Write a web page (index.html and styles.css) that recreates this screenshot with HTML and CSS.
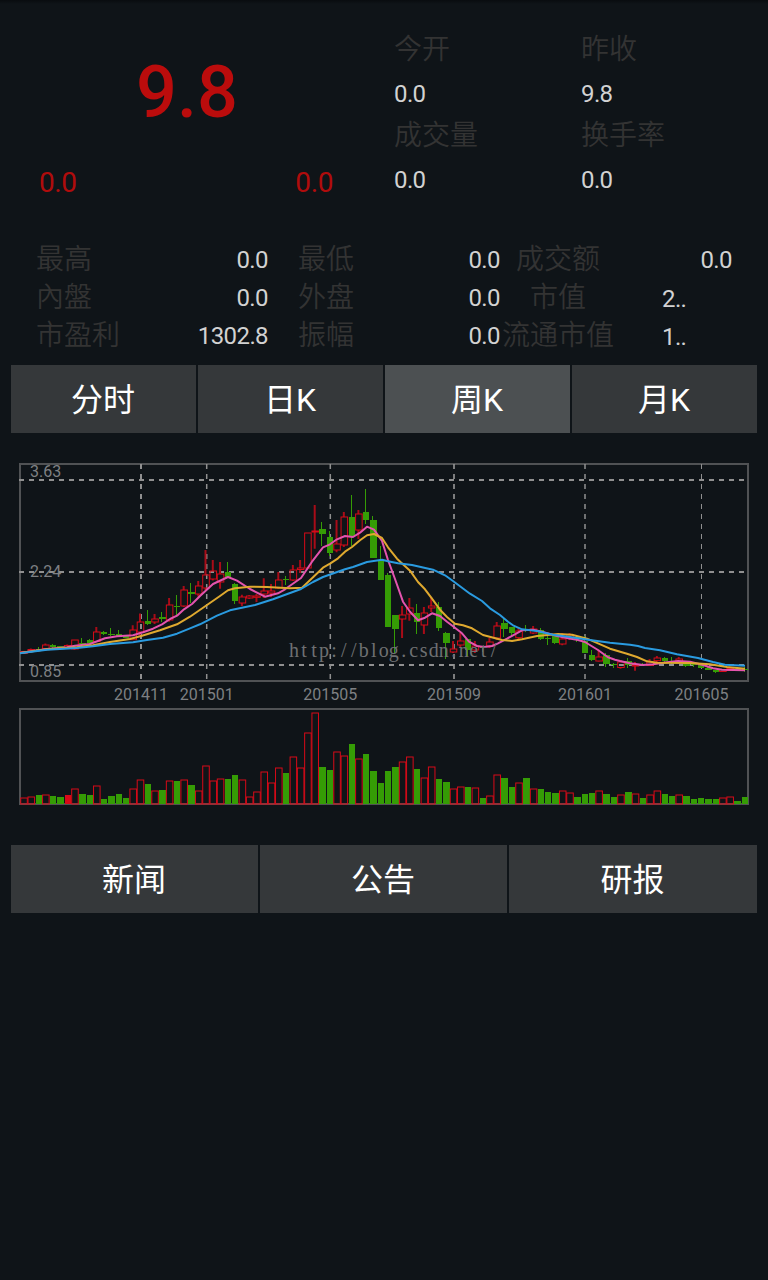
FILE: index.html
```html
<!DOCTYPE html>
<html lang="zh-CN">
<head>
    <meta charset="UTF-8">
    <meta name="viewport" content="width=device-width, initial-scale=1.0">
    <title>周K</title>
    <link rel="stylesheet" href="styles.css">
</head>
<body>
    <div class="quote">
        <div class="price-box">
            <div class="price">9.8</div>
            <div class="change">
                <span>0.0</span>
                <span>0.0</span>
            </div>
        </div>
        <div class="summary">
            <div class="item"><span class="name">今开</span><span class="num">0.0</span></div>
            <div class="item"><span class="name">昨收</span><span class="num">9.8</span></div>
            <div class="item"><span class="name">成交量</span><span class="num">0.0</span></div>
            <div class="item"><span class="name">换手率</span><span class="num">0.0</span></div>
        </div>
    </div>

    <div class="details">
        <div class="row"><span class="name">最高</span><span class="num">0.0</span></div>
        <div class="row"><span class="name">最低</span><span class="num">0.0</span></div>
        <div class="row last"><span class="name">成交额</span><span class="num">0.0</span></div>
        <div class="row"><span class="name">內盤</span><span class="num">0.0</span></div>
        <div class="row"><span class="name">外盘</span><span class="num">0.0</span></div>
        <div class="row last"><span class="name">市值</span><span class="num cut">2..</span></div>
        <div class="row"><span class="name">市盈利</span><span class="num">1302.8</span></div>
        <div class="row"><span class="name">振幅</span><span class="num">0.0</span></div>
        <div class="row last"><span class="name">流通市值</span><span class="num cut">1..</span></div>
    </div>

    <div class="tabs">
        <div class="tab">分时</div>
        <div class="tab">日K</div>
        <div class="tab active">周K</div>
        <div class="tab">月K</div>
    </div>

    <svg class="chart" id="chart" width="768" height="365" viewBox="0 450 768 365"></svg>

    <div class="tabs news">
        <div class="tab">新闻</div>
        <div class="tab">公告</div>
        <div class="tab">研报</div>
    </div>

    <script src="chart.js"></script>
</body>
</html>
```

FILE: styles.css
```css
body {
    margin: 0;
    min-height: 1280px;
    background: linear-gradient(#090c0f, #0f1418 4px) no-repeat #0f1418;
    font-family: Roboto, "Noto Sans CJK SC", sans-serif;
    color: #fff;
}
.quote {
    display: flex;
    height: 241px;
}
.price-box {
    width: 374px;
}
.price {
    padding-top: 51px;
    height: 84px;
    line-height: 84px;
    font-size: 72px;
    font-weight: 500;
    text-align: center;
    color: #bb0c0c;
}
.change {
    display: flex;
    justify-content: space-between;
    margin-top: 28px;
    padding: 0 41px 0 39px;
    line-height: 40px;
    font-size: 28px;
    letter-spacing: -0.4px;
    color: #b00c0c;
}
.summary {
    display: grid;
    grid-template-columns: 187px 187px;
    grid-auto-rows: 86px;
    padding: 30px 0 0 20px;
}
.item {
    display: flex;
    flex-direction: column;
}
.item .name {
    line-height: 40px;
}
.item .num {
    padding-top: 7px;
    line-height: 34px;
}
.name {
    font-size: 28px;
    font-weight: 350;
    color: #333;
    white-space: nowrap;
}
.num {
    font-size: 24px;
    letter-spacing: -0.6px;
    color: #d2d2d2;
}
.details {
    display: grid;
    grid-template-columns: 232px 30px 202px 2px 230px;
    grid-auto-rows: 38px;
    padding: 0 0 10px 36px;
    height: 114px;
}
.row {
    display: flex;
    justify-content: space-between;
    line-height: 38px;
}
.row:nth-child(3n+1) {
    grid-column: 1;
}
.row:nth-child(3n+2) {
    grid-column: 3;
}
.row.last {
    grid-column: 5;
}
.last .name {
    width: 112px;
    text-align: center;
}
.num.cut {
    width: 70px;
    padding-top: 1px;
}
.tabs {
    display: grid;
    grid-template-columns: repeat(4, 185px);
    gap: 2px;
    padding: 0 11px;
}
.tab {
    box-sizing: border-box;
    height: 68px;
    padding: 1px 1px 0 0;
    line-height: 68px;
    background: #35383a;
    font-size: 32px;
    text-align: center;
}
.tab.active {
    background: #4c5052;
}
.chart {
    display: block;
    margin-top: 17px;
}
.news {
    grid-template-columns: 247px 247px 248px;
    margin-top: 30px;
}
.frame {
    fill: none;
    stroke: #505254;
    stroke-width: 2;
}
.grid {
    stroke: #909090;
    stroke-width: 2;
    stroke-dasharray: 5 5;
}
.axis {
    font-size: 16px;
    fill: #7e8083;
}
.date {
    text-anchor: middle;
}
.up {
    fill: none;
    stroke: #d80a18;
}
.wick-up {
    stroke: #a80c18;
    stroke-width: 2;
}
.down {
    fill: #359c05;
    shape-rendering: crispEdges;
}
.full {
    fill: #d80a18;
}
.wick-down {
    stroke: #359c05;
    shape-rendering: crispEdges;
}
.line {
    fill: none;
    stroke-width: 2;
    stroke-linejoin: round;
}
.ma5 {
    stroke: #e454ae;
}
.ma10 {
    stroke: #dfa92f;
}
.ma20 {
    stroke: #2a9be0;
}
.mark {
    font-family: "Liberation Serif", serif;
    font-size: 20px;
    text-anchor: middle;
    fill: #6e7072;
}
```

FILE: chart.js
```javascript
const LEFT = 20;
const STEP = 7.28;
const BASE = 804;

// direction, high, body top, body bottom, low, volume top
const weeks = [
    ["r", 651, 651.5, 653.5, 654, 797], ["r", 648.5, 649.5, 651, 652, 796], ["g", 647, 649, 650, 651, 795],
    ["r", 643.5, 645, 648.7, 649, 794], ["g", 644, 645, 647, 648, 796], ["g", 646, 646, 647, 648, 797],
    ["r", 644.5, 645.5, 648.5, 649, 795, 1], ["r", 640, 640, 649, 650, 788], ["g", 638, 643, 644, 645, 794],
    ["g", 639, 640, 643, 644, 795], ["r", 627, 632, 641.5, 642, 785], ["g", 631, 632, 634, 635, 799],
    ["g", 628, 634, 635, 636, 796], ["g", 630, 634, 636, 637, 794], ["g", 635, 636, 638, 638, 798],
    ["r", 625.3, 630, 639.7, 640, 788], ["r", 613.5, 622, 632, 635, 779], ["g", 610, 621, 624, 625, 784],
    ["r", 614, 619, 622, 624, 790], ["g", 612, 617, 619, 622, 790], ["r", 598, 605, 620, 621.7, 780],
    ["g", 595, 606, 607, 617, 781], ["r", 586, 590, 606, 607, 779], ["g", 583, 592, 594, 603, 785],
    ["r", 581, 586, 594, 596.5, 790], ["r", 550, 575, 588, 590, 765], ["r", 560, 571, 579, 580.5, 780],
    ["r", 562, 574, 582, 588.7, 778], ["g", 562, 572, 577, 578, 779], ["g", 583, 584, 601, 604, 775],
    ["r", 594.7, 597, 603, 606, 779], ["r", 595, 596, 598, 599, 796], ["r", 594, 596, 597.3, 602, 791],
    ["r", 578.3, 591, 594, 598, 771], ["r", 584, 591, 593, 597, 782], ["r", 572, 580, 588, 589, 767],
    ["g", 576, 579, 580, 585, 773], ["r", 565, 570, 580, 581, 756], ["r", 560, 568, 569.5, 573, 767],
    ["r", 533, 533, 568, 568, 732], ["r", 505, 531, 532, 548.7, 712], ["g", 522, 529, 534, 546, 767],
    ["g", 531, 537, 553, 556, 770], ["r", 520, 544, 550, 552.3, 751], ["r", 512, 517, 545, 547, 755],
    ["g", 495, 517, 537, 546, 744], ["r", 510, 514, 530, 539, 758], ["g", 489, 512, 520, 524, 754],
    ["g", 516, 520, 558, 558, 771], ["g", 546, 560, 580, 580, 783], ["g", 573, 575, 627, 627, 771],
    ["g", 615, 615, 629, 653, 767], ["r", 606, 615, 619, 638, 761], ["r", 598, 608, 614, 620.7, 756],
    ["g", 604, 613, 622, 634, 769], ["r", 607, 613, 625, 634, 777], ["r", 597, 606, 608, 612, 766],
    ["g", 602, 607, 628, 631, 779], ["g", 632, 633, 643, 659, 782], ["r", 641, 649, 652, 653, 788],
    ["r", 633, 641, 645, 648, 786], ["g", 639, 639, 650, 656, 787], ["r", 641, 646, 650, 653, 787],
    ["g", 646, 646, 648, 652, 798], ["r", 638, 642, 646, 648, 795], ["r", 622, 626, 638, 640, 774],
    ["g", 619, 623, 629, 637, 778], ["g", 627, 627, 633, 637, 787], ["r", 627, 631, 637.7, 641, 782],
    ["g", 625, 630, 631, 632, 778], ["r", 626, 629, 633, 634, 788], ["g", 628, 630, 639, 640, 789],
    ["g", 636, 638, 639, 645, 792], ["g", 636, 636, 643, 644, 793], ["r", 633, 639, 644, 645.3, 790],
    ["r", 633, 635, 638, 640, 792], ["g", 636, 637, 639, 642, 797], ["g", 636, 641, 653, 653, 794],
    ["g", 650, 655, 660, 661, 793], ["r", 649.7, 657, 661, 661.5, 790], ["g", 653, 655, 664, 667, 794],
    ["g", 663, 664, 665, 668, 797], ["r", 660, 662, 667.5, 668.7, 794], ["g", 658, 661, 665, 668, 792],
    ["r", 662, 665, 666, 670.7, 793], ["g", 663, 664, 665, 666, 798], ["r", 659, 662, 665.5, 666, 794],
    ["r", 656, 658, 660.7, 662, 790], ["g", 657, 658, 661, 662, 794], ["g", 657, 661, 662, 664, 796],
    ["r", 657, 659, 662, 663, 794], ["g", 662, 663, 666, 667, 796], ["g", 663, 664, 665, 667, 799],
    ["g", 664, 665, 668, 668, 798], ["g", 667, 668, 670, 670, 799], ["g", 670, 670, 672, 673, 799],
    ["r", 669, 669.5, 671.5, 672, 797], ["r", 668, 668.5, 670.5, 671, 796], ["g", 668, 669, 671, 671, 801],
    ["g", 667, 669, 670, 672, 797]
];

const ma5 = "20,653 33,651 47,649 67,647.3 75,645.7 90,644 105,638.3 117,636.3 133,635.3 143,632.3 153,628.7 162,624.3 170,619 177,615.7 184,609.3 192,604 200,596 213,584 228,577 237,580.7 250,589 265,596.7 278,593.3 285,589.3 301,578 312,561.7 323,547.3 330,544.3 337,539.3 345,536 353,537 360,532.7 367,526.7 374,529.7 382,541 388,560 395,579 403,601.7 410,611.7 418,620.3 425,617.7 432,613.3 440,616 447,621.7 453,626.3 462,633.3 469,641.7 477,646 484,647 492,646 498,643.3 507,638.7 522,630.3 533,629.7 542,631.7 557,636 567,638 578,640 585,642 598,650 608,657.3 615,659.7 620,661 630,663.3 643,665 653,664.3 667,662.3 678,661 690,661.7 703,665 713,668.3 722,669.7 745,670.3";
const ma10 = "20,653 47,649.3 77,647.3 93,645.3 110,642 130,639 142,635.7 160,630.3 177,624.3 190,616.7 207,605 220,596 228,590.3 235,588.3 250,586.7 267,587 290,588.3 302,587.7 312,578.3 323,567.7 330,563.7 338,558.3 345,551.7 352,547 360,540.3 367,535.3 374,534 382,538 388,547.3 397,558.7 404,565.3 410,570.7 418,582 425,589.3 432,598.7 440,609.7 447,617 455,623.7 463,625.3 472,628.3 483,635 502,640 512,641 522,639.3 537,636 558,634 572,634.7 587,638.7 598,643.3 610,648.7 627,653.7 637,657 647,661.3 657,662.7 690,663 710,664.3 727,667 745,668.7";
const ma20 = "20,653.3 47,649.7 77,648 93,646.3 110,644 133,642.3 147,640 163,637.7 177,633.7 190,628.3 200,624.3 217,615.7 230,610.3 255,605 273,599.3 301,589 313,582 323,577 345,569.3 353,567 367,562 382,559.7 388,561.3 398,563.3 412,565 433,569.7 445,575.3 453,581 470,593.7 482,601 490,608.3 500,615 508,621.7 513,625.3 522,629.3 537,631 553,634.7 570,637 590,640 610,642.7 630,644.7 638,646 645,648 660,650.3 677,654.3 698,658 713,662 725,664.7 745,665.7";

let svg = "";

svg += `<rect class="frame" x="20" y="464" width="728" height="217"/>`;
svg += `<rect class="frame" x="20" y="709" width="728" height="95"/>`;

// grid
const dates = [[141, "201411", 2], [206.7, "201501", 1.5], [330.3, "201505", 1.5], [454, "201509", 1.7], [585, "201601", 1.5], [701.5, "201605", 1]];
for (const y of [480, 572, 665]) {
    svg += `<line class="grid" x1="19" y1="${y}" x2="745" y2="${y}"/>`;
}
for (const [x, text, w] of dates) {
    svg += `<line class="grid" x1="${x}" y1="464" x2="${x}" y2="679" style="stroke-width:${w}"/>`;
    svg += `<text class="axis date" x="${x}" y="700">${text}</text>`;
}
svg += `<text class="axis" x="30" y="477">3.63</text>`;
svg += `<text class="axis" x="30" y="577">2.24</text>`;
svg += `<text class="axis" x="30" y="677">0.85</text>`;

// candles and volume
weeks.forEach(([dir, high, top, bottom, low, vol, full], i) => {
    const x = LEFT + STEP * i + 0.73;
    const w = 6.55;
    const mid = x + w / 2 - 0.5;
    if (dir === "g") {
        const gx = Math.round(x + 0.27);
        const gw = Math.round(x + w) - gx;
        const wick = Math.floor(mid) + 0.5;
        svg += `<line class="wick-down" x1="${wick}" y1="${high}" x2="${wick}" y2="${low}"/>`;
        svg += `<rect class="down" x="${gx}" y="${top}" width="${gw}" height="${bottom - top}"/>`;
        svg += `<rect class="down" x="${gx}" y="${vol}" width="${gw}" height="${BASE - vol}"/>`;
    } else {
        svg += `<path class="wick-up" d="M${mid} ${high}V${top}M${mid} ${bottom}V${low}"/>`;
        svg += `<rect class="up" x="${x}" y="${top}" width="${w}" height="${bottom - top}"/>`;
        if (full) {
            svg += `<rect class="full" x="65" y="${vol}" width="6" height="${BASE - vol}"/>`;
        } else {
            svg += `<rect class="up" x="${x}" y="${vol + 1}" width="${w}" height="${BASE - vol - 1}"/>`;
        }
    }
});

svg += `<polyline class="line ma5" points="${ma5}"/>`;
svg += `<polyline class="line ma10" points="${ma10}"/>`;
svg += `<polyline class="line ma20" points="${ma20}"/>`;

const mark = "http://blog.csdn.net/";
const markX = [...mark].map((c, i) => 294 + i * 9.98).join(" ");
svg += `<text class="mark" x="${markX}" y="657">${mark}</text>`;

document.getElementById("chart").innerHTML = svg;
```
